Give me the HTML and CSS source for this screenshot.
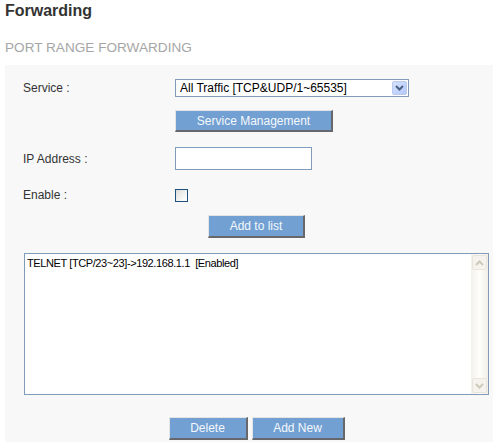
FILE: index.html
```html
<!DOCTYPE html>
<html>
<head>
<meta charset="utf-8">
<link rel="stylesheet" href="styles.css">
</head>
<body>
<h1 class="title">Forwarding</h1>
<h2 class="subtitle">PORT RANGE FORWARDING</h2>
<div class="panel">
  <div class="row row-service">
    <div class="label">Service :</div>
    <div class="select">
      <span class="select-text">All Traffic [TCP&amp;UDP/1~65535]</span>
      <span class="select-arrow">
        <svg width="9" height="6" viewBox="0 0 9 6"><path d="M1 1 L4.5 4.5 L8 1" fill="none" stroke="#4d6185" stroke-width="2"/></svg>
      </span>
    </div>
  </div>
  <div class="row row-mgmt">
    <div class="label"></div>
    <button class="btn btn-mgmt">Service Management</button>
  </div>
  <div class="row row-ip">
    <div class="label">IP Address :</div>
    <div class="input"></div>
  </div>
  <div class="row row-enable">
    <div class="label">Enable :</div>
    <div class="checkbox"></div>
  </div>
  <div class="center row-add">
    <button class="btn btn-add">Add to list</button>
  </div>
  <div class="listbox">
    <div class="list-content">
      <div class="list-item">TELNET [TCP/23~23]-&gt;192.168.1.1&nbsp; [Enabled]</div>
    </div>
    <div class="scrollbar">
      <div class="sb-btn">
        <svg width="9" height="6" viewBox="0 0 9 6"><path d="M1 5 L4.5 1.5 L8 5" fill="none" stroke="#cdcabb" stroke-width="2"/></svg>
      </div>
      <div class="sb-track"></div>
      <div class="sb-btn">
        <svg width="9" height="6" viewBox="0 0 9 6"><path d="M1 1 L4.5 4.5 L8 1" fill="none" stroke="#cdcabb" stroke-width="2"/></svg>
      </div>
    </div>
  </div>
  <div class="center row-bottom">
    <button class="btn btn-delete">Delete</button>
    <button class="btn btn-new">Add New</button>
  </div>
</div>
</body>
</html>
```

FILE: styles.css
```css
html, body {
  margin: 0;
  padding: 0;
  background: #ffffff;
  font-family: "Liberation Sans", Arial, sans-serif;
}

.title {
  margin: 0 0 0 5px;
  padding-top: 1px;
  font-size: 16px;
  line-height: 20px;
  font-weight: bold;
  color: #333333;
}

.subtitle {
  margin: 19px 0 0 5px;
  font-size: 13.6px;
  line-height: 16px;
  font-weight: normal;
  color: #a6a6a6;
}

.panel {
  margin: 9px 0 0 5px;
  padding: 14px 0 0 18px;
  background: #f8f8f8;
  height: 380px;
  box-sizing: border-box;
}

.row {
  display: flex;
  align-items: center;
}

.label {
  width: 152px;
  flex: none;
  font-size: 12px;
  color: #333333;
}

.select {
  width: 234px;
  height: 18px;
  box-sizing: border-box;
  border: 1px solid #7f9db9;
  background: #ffffff;
  display: flex;
  align-items: center;
  justify-content: space-between;
  padding: 0 1px 0 4px;
}

.select-text {
  font-size: 12px;
  color: #000000;
  line-height: 14px;
}

.select-arrow {
  width: 15px;
  height: 14px;
  box-sizing: border-box;
  border: 1px solid #b9c9ef;
  border-radius: 2px;
  background: linear-gradient(135deg, #d6e2fd 0%, #c1d3fb 60%, #b4c8f6 100%);
  display: flex;
  align-items: center;
  justify-content: center;
}

.row-mgmt {
  margin-top: 13px;
}

.btn {
  box-sizing: border-box;
  height: 22px;
  padding: 0;
  background: #72a0d2;
  color: #f4f8fc;
  font-family: "Liberation Sans", Arial, sans-serif;
  font-size: 12px;
  border: 1px solid;
  border-color: #e4e4e4 #66686c #66686c #e4e4e4;
  border-width: 1px 2px 2px 1px;
}

.btn-mgmt {
  width: 158px;
}

.row-ip {
  margin-top: 15px;
}

.input {
  width: 137px;
  height: 23px;
  box-sizing: border-box;
  border: 1px solid #7f9db9;
  background: #ffffff;
}

.row-enable {
  margin-top: 18px;
}

.checkbox {
  width: 13px;
  height: 13px;
  box-sizing: border-box;
  border: 1px solid #1c5180;
  background: linear-gradient(135deg, #dcdcd7 0%, #f4f4f2 60%, #ffffff 100%);
}

.center {
  display: flex;
  justify-content: center;
  width: 465px;
  margin-left: 1px;
}

.row-add {
  margin-top: 13px;
}

.btn-add {
  width: 97px;
  height: 23px;
}

.listbox {
  margin-top: 15px;
  margin-left: 1px;
  width: 465px;
  height: 142px;
  box-sizing: border-box;
  border: 1px solid #7f9db9;
  background: #ffffff;
  display: flex;
}

.list-content {
  flex: 1;
  padding: 3px 0 0 2px;
}

.list-item {
  font-size: 11px;
  letter-spacing: -0.4px;
  line-height: 13px;
  color: #000000;
}

.scrollbar {
  width: 17px;
  flex: none;
  display: flex;
  flex-direction: column;
  background: linear-gradient(90deg, #f3f1ec 0%, #fefefb 50%, #f0eee6 100%);
  padding: 1px;
  box-sizing: border-box;
}

.sb-btn {
  height: 15px;
  box-sizing: border-box;
  border: 1px solid #e8e6dc;
  border-radius: 2px;
  background: #f4f3ee;
  display: flex;
  align-items: center;
  justify-content: center;
}

.sb-track {
  flex: 1;
}

.row-bottom {
  margin-top: 22px;
  gap: 4px;
}

.btn-delete {
  width: 79px;
  height: 23px;
}

.btn-new {
  width: 93px;
  height: 23px;
}
```
